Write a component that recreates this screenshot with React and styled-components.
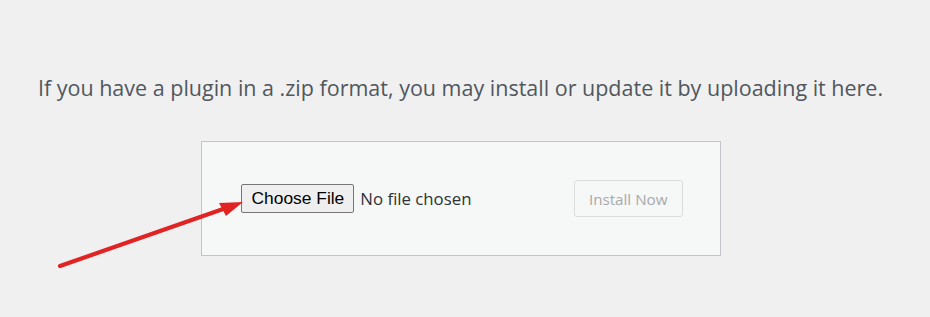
import React from "react";
import styled, { createGlobalStyle } from "styled-components";

const GlobalStyle = createGlobalStyle`
  html, body {
    margin: 0;
    padding: 0;
    background: #f0f0f1;
  }
  body {
    font-family: "Open Sans", "Noto Sans", sans-serif;
    color: #50575e;
  }
`;

const Page = styled.div`
  width: 921px;
  height: 317px;
  padding-top: 72px;
  box-sizing: border-box;
  position: relative;
  overflow: hidden;
`;

const Help = styled.p`
  margin: 0 0 37px;
  text-align: center;
  font-size: 21.5px;
  line-height: 32px;
  color: #50575e;
  white-space: nowrap;
`;

const UploadForm = styled.form`
  width: 520px;
  height: 115px;
  margin: 0 auto;
  box-sizing: border-box;
  border: 1px solid #c3c4c7;
  background: #f6f7f7;
  display: flex;
  align-items: center;
  justify-content: space-between;
  padding: 0 37px 0 39px;
`;

const FilePicker = styled.div`
  display: flex;
  align-items: center;
  gap: 6px;
`;

const PickButton = styled.button`
  height: 29px;
  padding: 0 9px 0 10px;
  border: 1px solid #767676;
  border-radius: 2px;
  background: #efefef;
  color: #000;
  font-family: "Liberation Sans", Arial, sans-serif;
  font-size: 17.4px;
`;

const FileName = styled.span`
  font-size: 16.8px;
  color: #2c3338;
`;

const SubmitButton = styled.button`
  height: 37px;
  padding: 0 14px;
  border: 1px solid #dcdcde;
  border-radius: 3px;
  background: #f6f7f7;
  color: #a7aaad;
  font-family: "Open Sans", "Noto Sans", sans-serif;
  font-size: 15.2px;
`;

const Arrow = styled.svg`
  position: absolute;
  left: 0;
  top: 0;
  pointer-events: none;
`;

export default function App() {
  return (
    <Page>
      <GlobalStyle />
      <Help>
        If you have a plugin in a .zip format, you may install or update it by
        uploading it here.
      </Help>
      <UploadForm onSubmit={(e) => e.preventDefault()}>
        <FilePicker>
          <PickButton type="button">Choose File</PickButton>
          <FileName>No file chosen</FileName>
        </FilePicker>
        <SubmitButton type="submit" disabled>
          Install Now
        </SubmitButton>
      </UploadForm>
      {/* red annotation arrow */}
      <Arrow width="930" height="317" viewBox="0 0 930 317">
        <line
          x1="60"
          y1="266"
          x2="226"
          y2="208"
          stroke="#e02424"
          strokeWidth="4.2"
          strokeLinecap="round"
        />
        <polygon points="243,202 219,203 226,216" fill="#e02424" />
      </Arrow>
    </Page>
  );
}
